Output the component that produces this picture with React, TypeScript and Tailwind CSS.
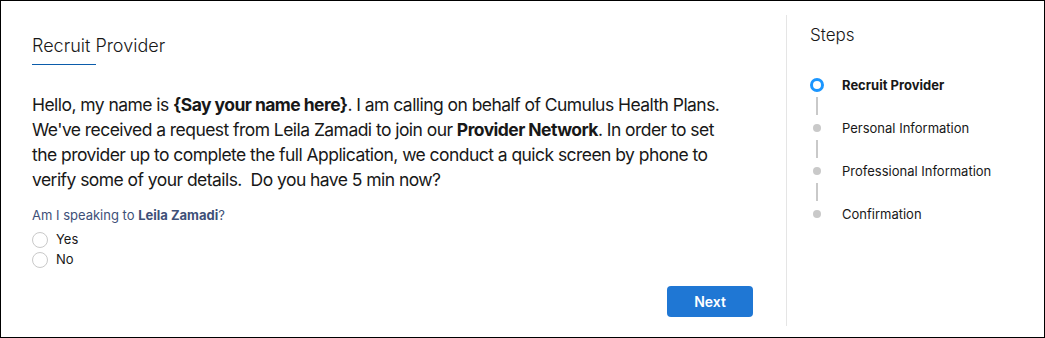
import React from "react";

const steps = [
  { label: "Recruit Provider", active: true },
  { label: "Personal Information", active: false },
  { label: "Professional Information", active: false },
  { label: "Confirmation", active: false },
];

export default function App() {
  return (
    <div
      className="w-[1045px] h-[338px] border border-black bg-white flex text-[#181818]"
      style={{ fontFamily: "Inter, 'Noto Sans', sans-serif" }}
    >
      {/* Main flow screen */}
      <div className="w-[785px] shrink-0 flex flex-col pl-[31px] pr-[33px] pt-[33px]">
        <h1 className="text-[18px] leading-[24px] font-light">Recruit Provider</h1>
        <div className="mt-[6px] h-px w-[64px] bg-[#0b5cab]" />

        <p className="mt-[27px] text-[17.5px] leading-[25px] tracking-[-0.55px] whitespace-nowrap">
          Hello, my name is <b className="font-bold">{"{Say your name here}"}</b>. I am calling on behalf of Cumulus Health Plans.
          <br />
          We've received a request from Leila Zamadi to join our <b className="font-bold">Provider Network</b>. In order to set
          <br />
          the provider up to complete the full Application, we conduct a quick screen by phone to
          <br />
          verify some of your details.&nbsp; Do you have 5 min now?
        </p>

        <div className="mt-[14px] text-[13px] leading-[18px] text-[#3e5078]">
          Am I speaking to <b className="font-bold">Leila Zamadi</b>?
        </div>
        <div className="mt-[6px] flex flex-col">
          {["Yes", "No"].map((opt) => (
            <label key={opt} className="h-[20px] flex items-center gap-[8px] text-[13px]">
              <span className="w-[16px] h-[16px] rounded-full border border-[#c9c9c9] bg-white" />
              {opt}
            </label>
          ))}
        </div>

        <div className="mt-[16px] flex justify-end">
          <button className="w-[86px] h-[31px] rounded-[4px] bg-[#1f77d4] text-white text-[14px] font-semibold">
            Next
          </button>
        </div>
      </div>

      {/* Divider */}
      <div className="w-px bg-[#e5e5e5] mt-[14px] mb-[11px]" />

      {/* Steps sidebar */}
      <div className="flex-1 pl-[23px] pt-[23px]">
        <h2 className="text-[17px] leading-[22px] font-light">Steps</h2>
        <div className="mt-[30px] flex flex-col">
          {steps.map((s, i) => (
            <div key={s.label} className={`flex gap-[18px] ${i < steps.length - 1 ? "h-[43px]" : ""}`}>
              <div className="w-[14px] flex flex-col items-center">
                <div className="h-[18px] flex items-center justify-center">
                  {s.active ? (
                    <span className="w-[14px] h-[14px] rounded-full border-[3px] border-[#1b96ff] bg-white" />
                  ) : (
                    <span className="w-[8px] h-[8px] rounded-full bg-[#c9c9c9]" />
                  )}
                </div>
                {i < steps.length - 1 && <div className="w-[2px] flex-1 bg-[#c9c9c9] mt-[3px] mb-[4px]" />}
              </div>
              <div className={`text-[13px] leading-[18px] ${s.active ? "font-bold" : ""}`}>{s.label}</div>
            </div>
          ))}
        </div>
      </div>
    </div>
  );
}
